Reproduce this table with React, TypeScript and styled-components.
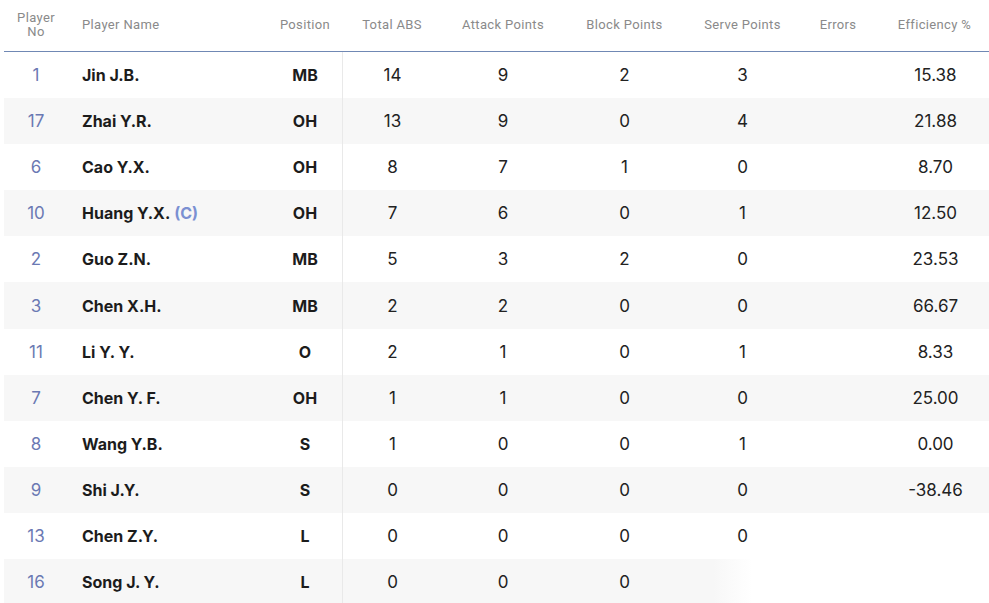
import React from "react";
import styled, { createGlobalStyle } from "styled-components";

const Global = createGlobalStyle`
  html, body { margin: 0; padding: 0; background: #fff; }
  body { font-family: Inter, "Noto Sans", sans-serif; }
`;

const COLS = "64px 200px 74px 100px 122px 121px 115px 76px 1fr";

const Table = styled.div`
  width: 985px;
  margin-left: 4px;
  overflow: hidden;
  height: 603px;
`;

const HeaderRow = styled.div`
  display: grid;
  grid-template-columns: ${COLS};
  height: 51px;
  border-bottom: 1px solid #7088b4;
  align-items: center;
`;

const HeadCell = styled.div<{ $left?: boolean; $shift?: boolean }>`
  font-family: Roboto, "Liberation Sans", sans-serif;
  font-size: 13px;
  letter-spacing: 0.35px;
  color: #8a8a8a;
  text-align: ${(p) => (p.$left ? "left" : "center")};
  padding-left: ${(p) => (p.$left ? "14px" : p.$shift ? "4px" : "0")};
  line-height: 14px;
  margin-top: -2px;
`;

const Row = styled.div<{ $striped: boolean; $fade?: boolean }>`
  display: grid;
  grid-template-columns: ${COLS};
  height: 46.1px;
  align-items: stretch;
  background: ${(p) =>
    p.$fade
      ? "linear-gradient(90deg, #f7f7f7 0%, #f7f7f7 72%, #ffffff 76%)"
      : p.$striped
      ? "#f7f7f7"
      : "#fff"};
`;

const Cell = styled.div<{ $divider?: boolean; $shift?: boolean }>`
  display: flex;
  align-items: center;
  justify-content: center;
  font-size: 17px;
  color: #222;
  padding-left: ${(p) => (p.$shift ? "6px" : "0")};
  border-left: ${(p) => (p.$divider ? "1px solid #e9e9e9" : "none")};
`;

const NoCell = styled(Cell)`
  color: #6b79b3;
  font-weight: 400;
`;

const NameCell = styled(Cell)`
  justify-content: flex-start;
  padding-left: 14px;
  font-size: 16px;
  font-weight: 700;
  color: #1c1c1c;
`;

const Captain = styled.span`
  color: #7b90d2;
  margin-left: 4px;
`;

const PosCell = styled(Cell)`
  font-size: 16px;
  font-weight: 700;
  color: #1c1c1c;
`;

type P = {
  no: number;
  name: string;
  cap?: boolean;
  pos: string;
  abs: string;
  att: string;
  blk: string;
  srv: string;
  err: string;
  eff: string;
};

const players: P[] = [
  { no: 1, name: "Jin J.B.", pos: "MB", abs: "14", att: "9", blk: "2", srv: "3", err: "", eff: "15.38" },
  { no: 17, name: "Zhai Y.R.", pos: "OH", abs: "13", att: "9", blk: "0", srv: "4", err: "", eff: "21.88" },
  { no: 6, name: "Cao Y.X.", pos: "OH", abs: "8", att: "7", blk: "1", srv: "0", err: "", eff: "8.70" },
  { no: 10, name: "Huang Y.X.", cap: true, pos: "OH", abs: "7", att: "6", blk: "0", srv: "1", err: "", eff: "12.50" },
  { no: 2, name: "Guo Z.N.", pos: "MB", abs: "5", att: "3", blk: "2", srv: "0", err: "", eff: "23.53" },
  { no: 3, name: "Chen X.H.", pos: "MB", abs: "2", att: "2", blk: "0", srv: "0", err: "", eff: "66.67" },
  { no: 11, name: "Li Y. Y.", pos: "O", abs: "2", att: "1", blk: "0", srv: "1", err: "", eff: "8.33" },
  { no: 7, name: "Chen Y. F.", pos: "OH", abs: "1", att: "1", blk: "0", srv: "0", err: "", eff: "25.00" },
  { no: 8, name: "Wang Y.B.", pos: "S", abs: "1", att: "0", blk: "0", srv: "1", err: "", eff: "0.00" },
  { no: 9, name: "Shi J.Y.", pos: "S", abs: "0", att: "0", blk: "0", srv: "0", err: "", eff: "-38.46" },
  { no: 13, name: "Chen Z.Y.", pos: "L", abs: "0", att: "0", blk: "0", srv: "0", err: "", eff: "" },
  { no: 16, name: "Song J. Y.", pos: "L", abs: "0", att: "0", blk: "0", srv: "", err: "", eff: "" },
];

export default function App() {
  return (
    <>
      <Global />
      <Table>
        <HeaderRow>
          <HeadCell>
            Player
            <br />
            No
          </HeadCell>
          <HeadCell $left>Player Name</HeadCell>
          <HeadCell>Position</HeadCell>
          <HeadCell>Total ABS</HeadCell>
          <HeadCell>Attack Points</HeadCell>
          <HeadCell>Block Points</HeadCell>
          <HeadCell>Serve Points</HeadCell>
          <HeadCell>Errors</HeadCell>
          <HeadCell $shift>Efficiency %</HeadCell>
        </HeaderRow>
        {players.map((p, i) => (
          <Row key={p.no} $striped={i % 2 === 1} $fade={i === players.length - 1}>
            <NoCell>{p.no}</NoCell>
            <NameCell>
              {p.name}
              {p.cap && <Captain>(C)</Captain>}
            </NameCell>
            <PosCell>{p.pos}</PosCell>
            <Cell $divider>{p.abs}</Cell>
            <Cell>{p.att}</Cell>
            <Cell>{p.blk}</Cell>
            <Cell>{p.srv}</Cell>
            <Cell>{p.err}</Cell>
            <Cell $shift>{p.eff}</Cell>
          </Row>
        ))}
      </Table>
    </>
  );
}
